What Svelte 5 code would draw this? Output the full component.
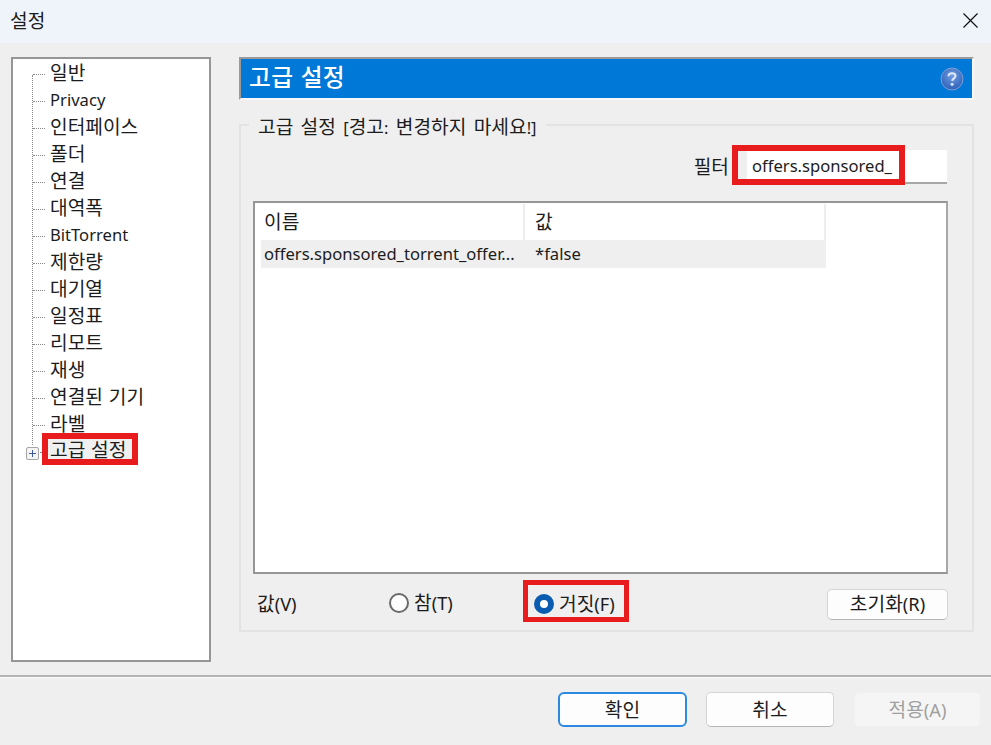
<script>
  const items = ['일반','Privacy','인터페이스','폴더','연결','대역폭','BitTorrent','제한량','대기열','일정표','리모트','재생','연결된 기기','라벨'];
  const runs = (s) => s.split(/([\u3131-\uD7A3]+(?: [\u3131-\uD7A3]+)*|\(\w\))/).filter(Boolean).map((text) => ({
    text,
    ko: /[\u3131-\uD7A3]/.test(text),
    mn: /^\(\w\)$/.test(text)
  }));
</script>

{#snippet t(s)}{#each runs(s) as r}<span class:ko={r.ko} class:mn={r.mn}>{r.text}</span>{/each}{/snippet}

<div class="window">
  <header class="title">
    <span>{@render t('설정')}</span>
    <svg class="close" width="15" height="15" viewBox="0 0 15 15"><path d="M0.5 0.5L14.5 14.5M14.5 0.5L0.5 14.5" stroke="#111" stroke-width="1.2" fill="none"/></svg>
  </header>

  <div class="main">
    <nav class="tree">
      <ul>
        {#each items as item}
          <li><span class="dots"></span><span class="label">{@render t(item)}</span></li>
        {/each}
        <li class="last">
          <span class="expander"><svg width="13" height="13" viewBox="0 0 13 13"><rect x="0.5" y="0.5" width="12" height="12" rx="1.5" fill="#f4f4f4" stroke="#a5a5a5"/><path d="M3 6.5H10M6.5 3V10" stroke="#3c5a9e" stroke-width="1"/></svg></span>
          <span class="dots short"></span>
          <span class="label selected">{@render t('고급 설정')}<i class="mark tree-mark"></i></span>
        </li>
      </ul>
    </nav>

    <section class="pane">
      <div class="banner">
        <h1>{@render t('고급 설정')}</h1>
        <svg class="help" width="24" height="24" viewBox="0 0 24 24">
          <defs><radialGradient id="hg" cx="50%" cy="35%" r="70%"><stop offset="0" stop-color="#6f9be0"/><stop offset="1" stop-color="#2a5cb5"/></radialGradient></defs>
          <circle cx="12" cy="12" r="11" fill="url(#hg)" stroke="#7d9fd6" stroke-width="1"/>
          <path d="M8.5 9.2C8.6 7.2 10 6.2 12 6.2C14 6.2 15.5 7.3 15.5 9C15.5 11.2 12.4 11.4 12.2 13.8" stroke="#dfe8f7" stroke-width="2.1" fill="none"/>
          <circle cx="12.1" cy="17.2" r="1.5" fill="#dfe8f7"/>
        </svg>
      </div>

      <div class="group">
        <span class="legend">{@render t('고급 설정 [경고: 변경하지 마세요!]')}</span>

        <div class="filter">
          <span class="filter-label">{@render t('필터')}</span>
          <div class="input">offers.sponsored_<i class="mark filter-mark"></i></div>
        </div>

        <div class="list">
          <div class="table">
            <div class="row head"><span class="c1">{@render t('이름')}</span><span class="c2">{@render t('값')}</span></div>
            <div class="row data"><span class="c1">offers.sponsored_torrent_offer...</span><span class="c2">*false</span></div>
          </div>
        </div>

        <div class="controls">
          <span class="val">{@render t('값(V)')}</span>
          <div class="one"><label class="radio"><span class="circle"></span><span>{@render t('참(T)')}</span></label></div>
          <label class="radio"><span class="circle on"></span><span>{@render t('거짓(F)')}</span><i class="mark radio-mark"></i></label>
          <button class="reset">{@render t('초기화(R)')}</button>
        </div>
      </div>
    </section>
  </div>

  <footer class="footer">
    <button class="btn primary">{@render t('확인')}</button>
    <button class="btn">{@render t('취소')}</button>
    <button class="btn disabled">{@render t('적용(A)')}</button>
  </footer>
</div>

<style>
  :global(body) { margin: 0; background: #efefef; }
  .window {
    width: 991px; height: 745px; display: flex; flex-direction: column; overflow: hidden;
    background: #efefef; color: #1c1c1c; box-sizing: border-box;
    font: 16.6px/22px "Noto Sans", "Noto Sans CJK KR", sans-serif;
  }
  .ko { font-family: "Noto Sans CJK KR", sans-serif; font-size: 1.157em; word-spacing: 1.5px; }
  .mn { font-size: 1.1em; }
  .title {
    height: 43px; flex: none; background: #eff4fb; display: flex; align-items: center;
    justify-content: space-between; padding: 0 13px 2px 10px; box-sizing: border-box;
  }
  .main { flex: 1; display: flex; padding: 14px 17px 0 11px; gap: 28px; min-height: 0; }

  .tree {
    width: 200px; height: 605px; flex: none; box-sizing: border-box;
    background: #fff; border: 2px solid #969696;
  }
  .tree ul { list-style: none; margin: 0; padding: 0; position: relative; }
  .tree ul::before {
    content: ""; position: absolute; left: 19px; top: 16px; height: 370px;
    border-left: 1px dotted #888;
  }
  .tree li { height: 27px; display: flex; align-items: center; position: relative; padding-left: 20px; }
  .dots { width: 12px; border-top: 1px dotted #888; margin-top: 4px; margin-right: 5px; flex: none; }
  .label { white-space: nowrap; position: relative; }
  .last { padding-left: 0 !important; }
  .expander { position: absolute; left: 13px; top: 10px; height: 13px; line-height: 0; }
  .dots.short { width: 4px; margin-left: 27px; margin-right: 4px; }
  .selected { background: #f0f0f0; padding: 0 6px 0 2px; height: 20px; line-height: 20px; margin-top: -4px; }

  .mark { position: absolute; display: block; border: 6px solid #e81c1c; box-sizing: border-box; pointer-events: none; }
  .tree-mark { left: -6px; right: -6px; top: -6px; bottom: -6px; }

  .pane { width: 735px; flex: none; }
  .banner {
    height: 43px; box-sizing: border-box; background: #0078d7; display: flex; align-items: center;
    justify-content: space-between; padding: 0 8px 0 8px;
    border: 2px solid; border-color: #9a9a9a #f7f7f7 #f7f7f7 #9a9a9a;
  }
  h1 { margin: -3px 0 0; font-size: 20.5px; font-weight: 500; color: #fff; letter-spacing: .4px; }
  .group {
    margin-top: 24px; height: 508px; box-sizing: border-box; border: 2px solid #e3e3e3; position: relative;
    padding: 24px 24px 0 12px;
  }
  .legend {
    position: absolute; left: 8px; top: -11px; padding: 0 9px; background: #efefef; white-space: nowrap; word-spacing: 3px;
  }
  .legend .ko { word-spacing: 3px; }
  .filter { display: flex; justify-content: flex-end; align-items: center; height: 34px; padding-right: 1px; }
  .filter-label { margin-right: 18px; }
  .input {
    position: relative; width: 200px; height: 34px; box-sizing: border-box; background: #fff;
    border-bottom: 2px solid #a8a8a8; padding-left: 5px; line-height: 32px;
  }
  .filter-mark { left: -15px; top: -5px; width: 173px; height: 40px; }

  .list {
    margin-top: 17px; height: 373px; box-sizing: border-box; background: #fff; border: 2px solid #969696;
    border-right-color: #a8a8a8; padding: 1px 0 0 6px;
  }
  .table { width: 565px; }
  .row { display: flex; box-sizing: border-box; }
  .row > span { box-sizing: border-box; white-space: nowrap; }
  .c1 { width: 264px; flex: none; padding-left: 3px; }
  .c2 { flex: 1; padding-left: 10px; }
  .head { height: 36px; align-items: center; border-right: 2px solid #ededed; }
  .head .c1 { border-right: 2px solid #ededed; height: 36px; line-height: 34px; }
  .data { height: 28px; align-items: center; background: #efefef; }

  .controls { position: relative; height: 46px; display: flex; align-items: center; margin-top: 7px; }
  .val { margin-left: 4px; width: 132px; }
  .one { width: 145px; flex: none; }
  .radio { display: inline-flex; align-items: center; position: relative; gap: 5px; }
  .circle { width: 20px; height: 20px; box-sizing: border-box; border: 2px solid #6a6a6a; border-radius: 50%; background: #fdfdfd; flex: none; }
  .circle.on { border: 6px solid #0a5cb0; background: #fff; }
  .radio-mark { left: -11px; right: -14px; top: -12px; height: 42px; border-width: 5px; }
  .reset {
    margin-left: auto; width: 121px; height: 31px; padding: 0;
    background: #fdfdfd; border: 1px solid #d4d4d4; border-bottom-color: #b5b5b5; border-radius: 5px;
    font: inherit; color: inherit;
  }

  .footer {
    height: 70px; flex: none; box-sizing: border-box; border-top: 2px solid #b4b4b4; box-shadow: inset 0 1px 0 #fafafa;
    display: flex; justify-content: flex-end; gap: 19px; padding: 15px 10px 0 0;
  }
  .btn {
    width: 128px; height: 35px; padding: 0; box-sizing: border-box; background: #fdfdfd;
    border: 1px solid #d4d4d4; border-bottom-color: #b5b5b5; border-radius: 5px; font: inherit; color: inherit;
  }
  .primary { width: 129px; border: 2px solid #2b8ae0; border-radius: 6px; }
  .disabled { width: 127px; margin-left: 1px; background: #f5f5f5; border-color: #f0f0f0; color: #a0a0a0; }
</style>
